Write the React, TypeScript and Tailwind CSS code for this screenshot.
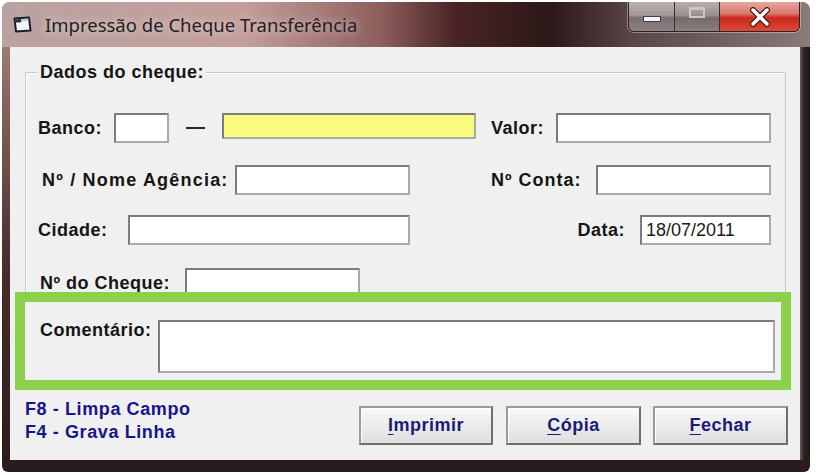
import type { ReactNode } from 'react';

const label = "font-['Liberation_Sans',Arial,sans-serif] font-bold text-[18px] tracking-[0.5px] leading-[22px] text-[#151515]";
const blue = "font-['Liberation_Sans',Arial,sans-serif] font-bold text-[18px] tracking-[0.6px] leading-[23px] text-[#16168a]";

function Field({ className, children }: { className: string; children?: ReactNode }) {
  return (
    <div
      className={`border-2 border-t-[#7c7c7c] border-l-[#7c7c7c] border-b-[#a9a9a9] border-r-[#a9a9a9] flex items-center pl-[4px] font-['Liberation_Sans',Arial,sans-serif] text-[18px] text-[#1a1a1a] ${className}`}
    >
      {children}
    </div>
  );
}

function WinButton({ hot, rest, className }: { hot: string; rest: string; className: string }) {
  return (
    <button
      className={`h-[39px] w-[134px] border-2 border-t-[#9a9a9a] border-l-[#9a9a9a] border-b-[#6e6e6e] border-r-[#6e6e6e] bg-[linear-gradient(180deg,#f7f7f7_0%,#ececec_50%,#dedede_100%)] shadow-[inset_1px_1px_0_#ffffff] font-['Liberation_Sans',Arial,sans-serif] font-bold text-[18px] tracking-[0.5px] text-[#1b1b78] ${className}`}
    >
      <span className="underline underline-offset-[3px] decoration-1">{hot}</span>
      {rest}
    </button>
  );
}

function AppIcon() {
  return (
    <svg width="19" height="17" viewBox="0 0 19 17">
      <path d="M1.5 2.5 L16 1.5 L17.5 14.5 L3 15.5 Z" fill="#eef5fb" stroke="#1c1c26" strokeWidth="2" strokeLinejoin="round" />
      <path d="M2.6 3.4 L8 3 L8.3 6.2 L2.9 6.6 Z" fill="#2a2a34" />
      <path d="M8.5 3 L15.2 2.5 L15.4 4.6 L8.7 5.1 Z" fill="#a9c4de" />
    </svg>
  );
}

function CaptionButtons() {
  return (
    <div className="ml-auto mr-[10px] self-start flex h-[30px] rounded-b-[6px] overflow-hidden border border-t-0 border-[#2e2020] shadow-[0_0_0_1px_rgba(255,255,255,0.35)]">
      <div className="w-[46px] flex justify-center pt-[14px] bg-[linear-gradient(180deg,#bdb2b2_0%,#a29696_45%,#7a6d6d_55%,#8e8282_100%)] border-r border-[#3a2c2c]">
        <div className="w-[18px] h-[6px] bg-[#f4f4f8] border border-[#3c3c4c]" />
      </div>
      <div className="w-[45px] flex justify-center pt-[5px] bg-[linear-gradient(180deg,#b8acac_0%,#9c9090_45%,#766a6a_55%,#8a7e7e_100%)] border-r border-[#3a2c2c]">
        <div className="w-[16px] h-[11px] border-2 border-[#cfc6c6] border-t-[3px]" />
      </div>
      <div className="w-[79px] flex justify-center pt-[5px] bg-[linear-gradient(180deg,#eaa49c_0%,#da7a70_40%,#c9271d_55%,#dd4a3a_100%)]">
        <svg width="24" height="20" viewBox="0 0 24 20">
          <path d="M5 3 L19 17 M19 3 L5 17" stroke="#3b1b1b" strokeWidth="6" strokeLinecap="round" />
          <path d="M5 3 L19 17 M19 3 L5 17" stroke="#ffffff" strokeWidth="3.5" strokeLinecap="round" />
        </svg>
      </div>
    </div>
  );
}

export default function App() {
  return (
    <div className="min-h-screen bg-white pt-[2px] pl-[2px]">
      <div className="w-[808px] h-[470px] rounded-t-[8px] rounded-b-[6px] overflow-hidden flex flex-col bg-[linear-gradient(180deg,#b4928e_0%,#8a6462_20%,#4a2e2c_55%,#2a1c1c_100%)]">
        {/* title bar */}
        <div className="h-[45px] flex items-center pl-[11px] bg-[linear-gradient(90deg,#b9a3a1_0%,#c49e9a_30%,#8c5e5c_47%,#4a2424_56%,#2c1818_68%,#5a4646_78%,#8a7a7a_100%)]">
          <AppIcon />
          <span className="ml-[13px] font-['Noto_Sans',sans-serif] text-[18.5px] text-[#241e1e] [text-shadow:0_0_8px_rgba(255,255,255,0.7)]">
            Impressão de Cheque Transferência
          </span>
          <CaptionButtons />
        </div>

        <div className="flex">
          <div className="w-[8px]" />
          {/* client area */}
          <div className="w-[790px] h-[413px] bg-[#f0f0f0] flex flex-col">
            {/* group box */}
            <div className="ml-[15px] mt-[25px] w-[761px] h-[228px] border border-[#c8c8c8] shadow-[inset_1px_1px_0_#ffffff]">
              <div className={`-mt-[12px] ml-[12px] w-fit px-[2px] bg-[#f0f0f0] ${label}`}>Dados do cheque:</div>

              <div className="mt-[30px] flex items-center h-[30px]">
                <div className={`w-[88px] pl-[12px] ${label}`}>Banco:</div>
                <Field className="w-[55px] h-[30px] bg-white" />
                <div className="w-[53px] flex justify-center">
                  <div className="w-[19px] h-[2px] bg-[#2a2a2a]" />
                </div>
                <Field className="w-[254px] h-[26px] self-start bg-[#fafa7e]" />
                <div className={`w-[80px] pl-[15px] ${label}`}>Valor:</div>
                <Field className="w-[215px] h-[30px] bg-white" />
              </div>

              <div className="mt-[22px] flex items-center h-[30px]">
                <div className={`w-[209px] pl-[16px] tracking-[1.2px] ${label}`}>Nº / Nome Agência:</div>
                <Field className="w-[175px] h-[30px] bg-white" />
                <div className={`w-[186px] pl-[81px] tracking-[1px] ${label}`}>Nº Conta:</div>
                <Field className="w-[175px] h-[30px] bg-white" />
              </div>

              <div className="mt-[20px] flex items-center h-[30px]">
                <div className={`w-[102px] pl-[12px] ${label}`}>Cidade:</div>
                <Field className="w-[282px] h-[30px] bg-white" />
                <div className={`w-[230px] pr-[15px] text-right ${label}`}>Data:</div>
                <Field className="w-[131px] h-[30px] bg-white">18/07/2011</Field>
              </div>

              <div className="mt-[23px] flex items-center h-[30px]">
                <div className={`w-[159px] pl-[14px] ${label}`}>Nº do Cheque:</div>
                <Field className="w-[175px] h-[30px] bg-white" />
              </div>
            </div>

            {/* highlighted comment box */}
            <div className="relative -mt-[8px] ml-[5px] w-[776px] h-[98px] border-[10px] border-[#8dd04e] bg-[#f0f0f0] flex items-start">
              <div className={`mt-[17px] w-[133px] pl-[15px] ${label}`}>Comentário:</div>
              <Field className="mt-[18px] w-[617px] h-[53px] bg-white" />
            </div>

            {/* bottom bar */}
            <div className="flex items-start">
              <div className="w-[349px] pl-[15px] pt-[8px]">
                <div className={blue}>F8 - Limpa Campo</div>
                <div className={blue}>F4 - Grava Linha</div>
              </div>
              <WinButton hot="I" rest="mprimir" className="mt-[16px]" />
              <WinButton hot="C" rest="ópia" className="mt-[16px] ml-[13px] w-[135px]" />
              <WinButton hot="F" rest="echar" className="mt-[16px] ml-[12px] w-[135px]" />
            </div>
          </div>
          <div className="w-[10px] h-[413px] bg-[linear-gradient(90deg,#6a5a5a_0%,#2c2222_40%,#1e1616_100%)]" />
        </div>
      </div>
    </div>
  );
}
